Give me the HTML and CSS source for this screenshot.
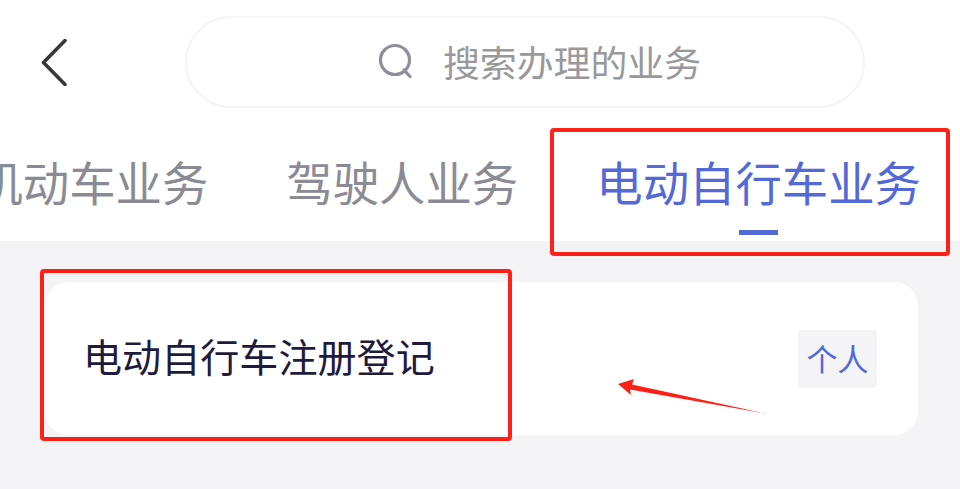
FILE: index.html
```html
<!DOCTYPE html>
<html lang="zh-CN">
<head>
<meta charset="utf-8">
<title>搜索办理的业务</title>
<link rel="stylesheet" href="styles.css">
</head>
<body>
<div class="page">
  <div class="top">
    <header class="header">
      <svg class="back" width="26" height="47" viewBox="0 0 26 47"><path d="M24 1.5 2.5 23.5 24 45.5" fill="none" stroke="#38383a" stroke-width="3.6" stroke-linecap="round" stroke-linejoin="round"/></svg>
      <div class="search">
        <svg class="search-icon" width="36" height="36" viewBox="0 0 36 36"><circle cx="17" cy="17" r="14.5" fill="none" stroke="#8f8f9c" stroke-width="3.2"/><path d="M26 27 32 33.5" fill="none" stroke="#8f8f9c" stroke-width="3.2" stroke-linecap="round"/></svg>
        <span class="placeholder">搜索办理的业务</span>
      </div>
    </header>
    <nav class="tabs">
      <div class="tab">机动车业务</div>
      <div class="tab">驾驶人业务</div>
      <div class="tab active">电动自行车业务<span class="bar"></span></div>
    </nav>
  </div>
  <main class="content">
    <div class="card">
      <span class="card-title">电动自行车注册登记</span>
      <span class="tag">个人</span>
    </div>
  </main>
  <div class="mark mark-tab"></div>
  <div class="mark mark-card"></div>
  <svg class="arrow" width="960" height="489" viewBox="0 0 960 489"><polygon points="618,384 634,379 632,384.5 768,414 630,389.5 631,395" fill="#ff1f14"/></svg>
</div>
</body>
</html>
```
FILE: styles.css
```css
* { box-sizing: border-box; }
html, body { margin: 0; padding: 0; }
body {
  font-family: "Noto Sans CJK SC", "Noto Sans", sans-serif;
  background: #f4f4f6;
}
.page {
  position: relative;
  width: 960px;
  height: 489px;
  overflow: hidden;
  background: #f4f4f6;
}
.top {
  height: 241px;
  background: #fff;
  display: flex;
  flex-direction: column;
}
.header {
  display: flex;
  align-items: flex-start;
  padding: 16px 95px 0 41px;
  height: 125px;
}
.back { margin-top: 23px; flex: none; }
.search {
  margin-left: 118px;
  width: 680px;
  height: 92px;
  border: 2px solid #f5f5f7;
  border-radius: 46px;
  display: flex;
  align-items: center;
  justify-content: center;
  gap: 29px;
  padding-left: 29px;
}
.search-icon { flex: none; margin-top: -2px; }
.placeholder {
  font-size: 36.9px;
  line-height: 50px;
  margin-top: -3px;
  color: #99999c;
  white-space: nowrap;
}
.tabs {
  display: flex;
  justify-content: flex-end;
  gap: 78px;
  padding-right: 39px;
  white-space: nowrap;
}
.tab {
  position: relative;
  flex: none;
  font-size: 46.4px;
  line-height: 66px;
  height: 116px;
  padding-top: 23px;
  color: #8b8b96;
}
.tab.active { color: #5468d8; }
.bar {
  position: absolute;
  left: 143px;
  top: 105px;
  width: 39px;
  height: 5px;
  background: #5468d8;
}
.content { padding: 41px 42px 0 45px; }
.card {
  height: 153px;
  background: #fff;
  border-radius: 24px;
  display: flex;
  align-items: center;
  justify-content: space-between;
  padding: 0 41px 0 38px;
}
.card-title {
  font-size: 39.1px;
  line-height: 54px;
  margin-top: -8px;
  color: #1f1b3d;
  white-space: nowrap;
}
.tag {
  width: 79px;
  height: 58px;
  border-radius: 4px;
  background: #f4f4f6;
  color: #5468d8;
  font-size: 31px;
  line-height: 56px;
  text-align: center;
  white-space: nowrap;
}
.mark {
  position: absolute;
  border: 4px solid #ff2117;
  border-radius: 4px;
}
.mark-tab { left: 550px; top: 128px; width: 400px; height: 128px; }
.mark-card { left: 40px; top: 269px; width: 472px; height: 172px; }
.arrow { position: absolute; left: 0; top: 0; }
```
